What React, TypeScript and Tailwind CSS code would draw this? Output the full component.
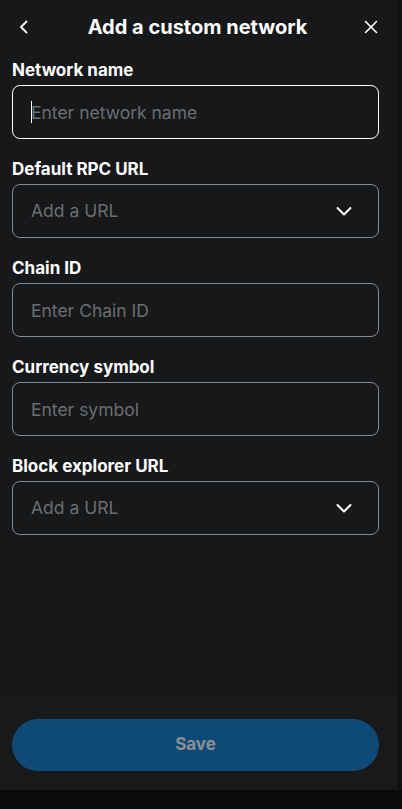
import React from 'react';

const ChevronDown: React.FC = () => (
  <svg width="18" height="18" viewBox="0 0 18 18" fill="none" stroke="#ffffff" strokeWidth="2" strokeLinecap="round" strokeLinejoin="round">
    <path d="M2.5 6l6.5 6.5 6.5-6.5" />
  </svg>
);

const Label: React.FC<{ children: React.ReactNode }> = ({ children }) => (
  <label className="block text-[17px] leading-6 font-bold text-white mb-[3px]">{children}</label>
);

const TextField: React.FC<{ placeholder: string; focused?: boolean }> = ({ placeholder, focused }) => (
  <div className="relative">
    <input
      type="text"
      placeholder={placeholder}
      className={`w-full h-[54px] rounded-lg bg-transparent px-[18px] text-[17.5px] text-white caret-white outline-none placeholder:text-[#6b6e72] border ${
        focused ? 'border-white' : 'border-[#858b92]'
      }`}
    />
    {/* caret of the focused field */}
    {focused && <span className="absolute left-[19px] top-[16px] w-px h-[22px] bg-white" />}
  </div>
);

const SelectField: React.FC<{ placeholder: string }> = ({ placeholder }) => (
  <div className="w-full h-[54px] rounded-lg border border-[#858b92] pl-[18px] pr-[25px] flex items-center justify-between">
    <span className="text-[17.5px] text-[#6b6e72]">{placeholder}</span>
    <ChevronDown />
  </div>
);

const App: React.FC = () => {
  const fields = [
    { label: 'Network name', placeholder: 'Enter network name', kind: 'input', focused: true },
    { label: 'Default RPC URL', placeholder: 'Add a URL', kind: 'select' },
    { label: 'Chain ID', placeholder: 'Enter Chain ID', kind: 'input' },
    { label: 'Currency symbol', placeholder: 'Enter symbol', kind: 'input' },
    { label: 'Block explorer URL', placeholder: 'Add a URL', kind: 'select' },
  ];

  return (
    <div className="w-[402px] h-[809px] bg-[#0a0a0b] flex flex-col font-['Inter','Liberation_Sans',sans-serif]">
      <div className="flex h-[790px]">
        <div className="w-[397px] h-full flex flex-col bg-[#17181a]">
          {/* Header */}
          <div className="h-[52px] pt-px pl-3 pr-[18px] flex items-center justify-between">
            <button className="w-8 h-8 -ml-1 flex items-center justify-center text-white">
              <svg width="16" height="16" viewBox="0 0 16 16" fill="none" stroke="currentColor" strokeWidth="1.8" strokeLinecap="round" strokeLinejoin="round">
                <path d="M10.5 2.5L5 8l5.5 5.5" />
              </svg>
            </button>
            <h1 className="text-[20px] font-bold text-white">Add a custom network</h1>
            <button className="w-8 h-8 -mr-2 flex items-center justify-center text-white">
              <svg width="16" height="16" viewBox="0 0 16 16" fill="none" stroke="currentColor" strokeWidth="1.6" strokeLinecap="round">
                <path d="M2.5 2.5l11 11M13.5 2.5l-11 11" />
              </svg>
            </button>
          </div>

          {/* Form */}
          <div className="flex-1 pl-3 pr-[18px] pt-[6px] flex flex-col gap-[18px]">
            {fields.map((f) => (
              <div key={f.label}>
                <Label>{f.label}</Label>
                {f.kind === 'input' ? (
                  <TextField placeholder={f.placeholder} focused={f.focused} />
                ) : (
                  <SelectField placeholder={f.placeholder} />
                )}
              </div>
            ))}
          </div>

          {/* Footer */}
          <div className="h-[90px] pl-3 pr-[18px] flex items-center bg-[#18191b]">
            <button className="w-full h-[52px] rounded-full bg-[#0e4a75] text-[17px] font-bold text-[#8a9096]">
              Save
            </button>
          </div>
        </div>
        <div className="w-[5px] h-full bg-[#111214]" />
      </div>
    </div>
  );
};

export default App;
